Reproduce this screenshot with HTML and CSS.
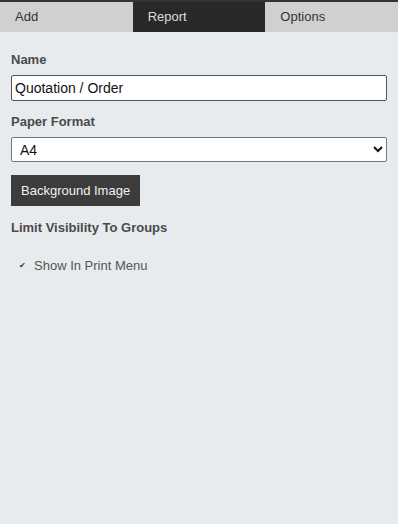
FILE: index.html
```html
<!DOCTYPE html>
<html lang="en">
<head>
    <meta charset="UTF-8">
    <meta name="viewport" content="width=device-width, initial-scale=1.0">
    <title>Report Settings</title>
    <link rel="stylesheet" href="styles.css">
</head>
<body>

    <!-- Tabs -->
    <div class="tabs">
        <div class="tab">Add</div>
        <div class="tab active">Report</div>
        <div class="tab">Options</div>
    </div>

    <!-- Report form -->
    <div class="panel">
        <label class="label">Name</label>
        <input class="field" type="text" value="Quotation / Order">

        <label class="label">Paper Format</label>
        <select class="field select">
            <option>A4</option>
            <option>A5</option>
            <option>Letter</option>
        </select>

        <button class="btn">Background Image</button>

        <div class="label">Limit Visibility To Groups</div>

        <div class="check">
            <span class="tick">&#10004;</span>
            <span>Show In Print Menu</span>
        </div>
    </div>

</body>
</html>
```

FILE: styles.css
```css
/* General Styling */
body {
    margin: 0;
    min-height: 100vh;
    background: #e8ebee;
    font-family: 'Liberation Sans', Arial, sans-serif;
    color: #444;
    border-top: 2px solid #333;
    box-sizing: border-box;
}

/* Tabs */
.tabs {
    display: flex;
    background: #d0d0d0;
}

.tab {
    flex: 1;
    height: 30px;
    line-height: 30px;
    padding-left: 15px;
    font-size: 13px;
    color: #333;
}

.tab.active {
    background: #282828;
    color: #ddd;
}

/* Panel */
.panel {
    display: flex;
    flex-direction: column;
    align-items: flex-start;
    padding: 20px 11px;
}

.label {
    font-size: 13px;
    font-weight: bold;
    color: #4a4a4a;
    margin-bottom: 8px;
}

.field {
    box-sizing: border-box;
    width: 100%;
    height: 26px;
    margin: 0 0 13px;
    border: 1px solid #555;
    border-radius: 2px;
    background: #fff;
    font-family: 'Liberation Sans', Arial, sans-serif;
    font-size: 14px;
    color: #111;
    padding: 0 3px;
}

.select {
    height: 25px;
    border-color: #767676;
    padding: 0 4px;
    margin-bottom: 13px;
}

.btn {
    background: #3c3c3c;
    color: #f2f2f2;
    border: none;
    font-family: 'Liberation Sans', Arial, sans-serif;
    font-size: 13px;
    height: 31px;
    padding: 0 10px;
    margin-bottom: 14px;
}

.check {
    display: flex;
    align-items: center;
    gap: 8px;
    margin-top: 15px;
    padding-left: 8px;
    font-size: 13px;
    color: #555;
}

.tick {
    font-size: 8px;
    color: #333;
}
```
